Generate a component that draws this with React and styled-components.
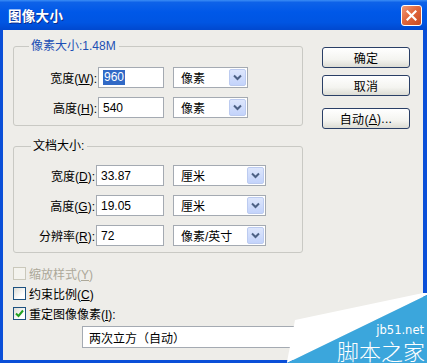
import React from 'react';
import styled, { createGlobalStyle } from 'styled-components';

const Global = createGlobalStyle`
  html, body { margin: 0; padding: 0; }
  body {
    width: 427px; height: 363px; overflow: hidden;
    font-family: "Liberation Sans", "Noto Sans CJK SC", sans-serif;
    font-size: 12px; color: #000;
  }
`;

const Window = styled.div`
  position: relative;
  width: 427px;
  height: 363px;
  display: flex;
  flex-direction: column;
  background: #0a4fd8;
  overflow: hidden;
`;

const TitleBar = styled.div`
  height: 30px;
  flex: none;
  display: flex;
  align-items: center;
  justify-content: space-between;
  padding: 0 5px 0 8px;
  background: linear-gradient(to bottom, #3b8df5 0%, #0e62e8 8%, #0058e8 40%, #0055e2 75%, #0048cf 100%);
`;

const Title = styled.span`
  color: #fff;
  font-family: "Noto Sans CJK SC", sans-serif;
  font-weight: 700;
  font-size: 13.5px;
  letter-spacing: 0.3px;
  text-shadow: 1px 1px 0 #0a2a8a;
`;

const CloseButton = styled.div`
  width: 19px;
  height: 19px;
  border: 1px solid #fff;
  border-radius: 3px;
  background: linear-gradient(135deg, #f09a78 0%, #e2683d 45%, #c84a22 100%);
  display: flex;
  align-items: center;
  justify-content: center;
`;

const Body = styled.div`
  flex: 1;
  margin: 0 4px 3px 3px;
  background: #eeede9;
  display: flex;
  padding: 9px 13px 0 10px;
  gap: 19px;
`;

const LeftCol = styled.div`
  width: 290px;
  display: flex;
  flex-direction: column;
`;

const Group = styled.fieldset`
  margin: ${p => p.$mt || 0}px 0 0 0;
  padding: ${p => p.$pt}px 0 ${p => p.$pb}px 0;
  border: 1px solid #c9c9c4;
  border-radius: 3px;
  display: flex;
  flex-direction: column;
  gap: 9px;
  min-width: 0;
`;

const Legend = styled.legend`
  margin-left: ${p => p.$ml}px;
  padding: 0 3px 0 2px;
  line-height: 14px;
  color: ${p => p.$color || '#000'};
`;

const Row = styled.div`
  display: flex;
  align-items: center;
  height: 21px;
`;

const Label = styled.label`
  width: ${p => p.$w}px;
  text-align: right;
  padding-right: 1px;
  box-sizing: border-box;
  white-space: nowrap;
  u { text-decoration: underline; }
`;

const TextBox = styled.div`
  width: ${p => p.$w}px;
  height: 21px;
  box-sizing: border-box;
  border: 1px solid #a4aab2;
  background: #fff;
  display: flex;
  align-items: center;
  padding-left: 4px;
  margin-right: 9px;
`;

const Selected = styled.span`
  background: #3169c6;
  color: #fff;
  padding: 0 1px;
  line-height: 15px;
`;

const Select = styled.div`
  width: ${p => p.$w}px;
  height: 21px;
  box-sizing: border-box;
  border: 1px solid #a4aab2;
  background: #fff;
  display: flex;
  align-items: center;
  justify-content: space-between;
  padding: 1px 1px 1px 7px;
`;

const DropBtn = styled.div`
  width: 17px;
  height: 17px;
  box-sizing: border-box;
  border: 1px solid #bccbf0;
  border-radius: 2px;
  background: linear-gradient(to bottom, #dde6fc 0%, #c3d3fb 100%);
  display: flex;
  align-items: center;
  justify-content: center;
`;

const Chevron = () => (
  <svg width="9" height="7" viewBox="0 0 9 7">
    <path d="M1 1.5 L4.5 5 L8 1.5" fill="none" stroke="#4d6185" strokeWidth="2" />
  </svg>
);

const CheckList = styled.div`
  margin-top: 10px;
  display: flex;
  flex-direction: column;
`;

const CheckRow = styled.div`
  height: 20px;
  display: flex;
  align-items: center;
  gap: 3px;
  color: ${p => (p.$disabled ? '#aca899' : '#000')};
`;

const Box = styled.div`
  width: 13px;
  height: 13px;
  box-sizing: border-box;
  border: 1px solid ${p => (p.$disabled ? '#cac8bb' : '#1c5180')};
  background: ${p => (p.$disabled ? '#f4f3ee' : 'linear-gradient(135deg, #dcdcd6 0%, #fff 70%)')};
  display: flex;
  align-items: center;
  justify-content: center;
`;

const Combo = styled.div`
  margin: 3px 0 0 69px;
  width: 230px;
  height: 22px;
  box-sizing: border-box;
  border: 1px solid #a4aab2;
  background: #fff;
  display: flex;
  align-items: center;
  padding-left: 6px;
`;

const RightCol = styled.div`
  width: 88px;
  display: flex;
  flex-direction: column;
  padding-top: 8px;
`;

const Button = styled.div`
  height: 21px;
  box-sizing: border-box;
  margin-top: ${p => p.$mt || 0}px;
  border: 1px solid #2a3f66;
  border-radius: 3px;
  background: linear-gradient(to bottom, #ffffff 0%, #f4f4f0 60%, #dcdcd4 100%);
  display: flex;
  align-items: center;
  justify-content: center;
  letter-spacing: 0.3px;
`;

const Watermark = styled.div`
  position: absolute;
  right: 0;
  bottom: 0;
  width: 140px;
  height: 72px;
`;

const WmSvg = styled.svg`
  position: absolute;
  inset: 0;
`;

const WmUrl = styled.span`
  position: absolute;
  right: 3px;
  top: 33px;
  color: #fff;
  font-family: "DejaVu Sans", sans-serif;
  font-size: 11.5px;
  line-height: 12px;
`;

const WmName = styled.span`
  position: absolute;
  right: 2px;
  top: 47px;
  color: #fff;
  font-family: "Noto Sans CJK SC", sans-serif;
  font-weight: 300;
  font-size: 22px;
  line-height: 24px;
`;

const Field = ({ label, hot, after = '):', lw, iw, value, selected, sw, unit }) => (
  <Row>
    <Label $w={lw}>{label}(<u>{hot}</u>{after}</Label>
    <TextBox $w={iw}>{selected ? <Selected>{value}</Selected> : value}</TextBox>
    <Select $w={sw}>
      <span>{unit}</span>
      <DropBtn><Chevron /></DropBtn>
    </Select>
  </Row>
);

export default function App() {
  return (
    <>
      <Global />
      <Window>
        <TitleBar>
          <Title>图像大小</Title>
          <CloseButton>
            <svg width="11" height="11" viewBox="0 0 11 11">
              <path d="M1.5 1.5 L9.5 9.5 M9.5 1.5 L1.5 9.5" stroke="#fff" strokeWidth="2.2" strokeLinecap="square" />
            </svg>
          </CloseButton>
        </TitleBar>
        <Body>
          <LeftCol>
            <Group $pt={14} $pb={7}>
              <Legend $ml={15} $color="#1d4fb4">像素大小:1.48M</Legend>
              <Field label="宽度" hot="W" lw={84} iw={66} value="960" selected sw={75} unit="像素" />
              <Field label="高度" hot="H" lw={84} iw={66} value="540" sw={75} unit="像素" />
            </Group>
            <Group $mt={13} $pt={12} $pb={6}>
              <Legend $ml={17}>文档大小:</Legend>
              <Field label="宽度" hot="D" lw={82} iw={68} value="33.87" sw={93} unit="厘米" />
              <Field label="高度" hot="G" lw={82} iw={68} value="19.05" sw={93} unit="厘米" />
              <Field label="分辨率" hot="R" lw={82} iw={68} value="72" sw={93} unit="像素/英寸" />
            </Group>
            <CheckList>
              <CheckRow $disabled>
                <Box $disabled />
                <span>缩放样式(<u>Y</u>)</span>
              </CheckRow>
              <CheckRow>
                <Box />
                <span>约束比例(<u>C</u>)</span>
              </CheckRow>
              <CheckRow>
                <Box>
                  <svg width="9" height="9" viewBox="0 0 9 9">
                    <path d="M1 4.5 L3.5 7 L8 1.5" fill="none" stroke="#21a121" strokeWidth="2" />
                  </svg>
                </Box>
                <span>重定图像像素(<u>I</u>):</span>
              </CheckRow>
            </CheckList>
            <Combo>两次立方（自动）</Combo>
          </LeftCol>
          <RightCol>
            <Button>确定</Button>
            <Button $mt={7}>取消</Button>
            <Button $mt={12}>自动(<u>A</u>)...</Button>
          </RightCol>
        </Body>
        <Watermark>
          <WmSvg width="140" height="72" viewBox="0 0 140 72">
            <polygon points="8,29 136,2 140,2 140,4 0,72 0,71" fill="#ffffff" />
            <polygon points="0,72 140,4 140,72" fill="#3ba6dc" />
          </WmSvg>
          <WmUrl>jb51.net</WmUrl>
          <WmName>脚本之家</WmName>
        </Watermark>
      </Window>
    </>
  );
}
